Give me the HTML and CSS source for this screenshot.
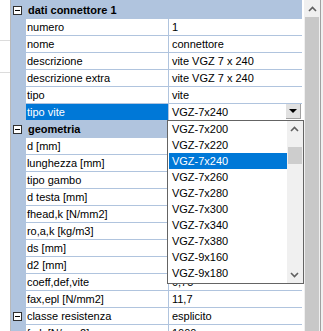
FILE: index.html
```html
<!DOCTYPE html>
<html lang="it">
<head>
  <meta charset="UTF-8" />
  <title>Proprietà connettore</title>
  <link rel="stylesheet" href="styles.css">
</head>
<body>
  <div id="window">
    <div id="side">
      <div class="side-line"></div>
      <div class="side-line"></div>
    </div>

    <div id="grid">
      <div class="row cat first">
        <span class="gutter"><span class="toggle"></span></span>
        <span class="cat-label">dati connettore 1</span>
      </div>
      <div class="row"><span class="gutter"></span><span class="name">numero</span><span class="value">1</span></div>
      <div class="row"><span class="gutter"></span><span class="name">nome</span><span class="value">connettore</span></div>
      <div class="row"><span class="gutter"></span><span class="name">descrizione</span><span class="value">vite VGZ 7 x 240</span></div>
      <div class="row"><span class="gutter"></span><span class="name">descrizione extra</span><span class="value">vite VGZ 7 x 240</span></div>
      <div class="row"><span class="gutter"></span><span class="name">tipo</span><span class="value">vite</span></div>
      <div class="row selected">
        <span class="gutter"></span>
        <span class="name">tipo vite</span>
        <span class="value combo">VGZ-7x240<span class="combo-btn"><span class="tri-down"></span></span></span>
      </div>

      <div class="row cat">
        <span class="gutter"><span class="toggle"></span></span>
        <span class="cat-label">geometria</span>
      </div>
      <!-- values of these rows sit under the open list -->
      <div class="row"><span class="gutter"></span><span class="name">d [mm]</span><span class="value"></span></div>
      <div class="row"><span class="gutter"></span><span class="name">lunghezza [mm]</span><span class="value"></span></div>
      <div class="row"><span class="gutter"></span><span class="name">tipo gambo</span><span class="value"></span></div>
      <div class="row"><span class="gutter"></span><span class="name">d testa [mm]</span><span class="value"></span></div>
      <div class="row"><span class="gutter"></span><span class="name">fhead,k [N/mm2]</span><span class="value"></span></div>
      <div class="row"><span class="gutter"></span><span class="name">ro,a,k [kg/m3]</span><span class="value"></span></div>
      <div class="row"><span class="gutter"></span><span class="name">ds [mm]</span><span class="value"></span></div>
      <div class="row"><span class="gutter"></span><span class="name">d2 [mm]</span><span class="value"></span></div>
      <div class="row"><span class="gutter"></span><span class="name">coeff,def,vite</span><span class="value">0,75</span></div>
      <div class="row"><span class="gutter"></span><span class="name">fax,epl [N/mm2]</span><span class="value">11,7</span></div>
      <div class="row">
        <span class="gutter"><span class="toggle"></span></span>
        <span class="name">classe resistenza</span><span class="value">esplicito</span>
      </div>
      <div class="row"><span class="gutter"></span><span class="name">fu,k [N/mm2]</span><span class="value">1000</span></div>

      <div id="dropdown">
        <ul class="items">
          <li>VGZ-7x200</li>
          <li>VGZ-7x220</li>
          <li class="picked">VGZ-7x240</li>
          <li>VGZ-7x260</li>
          <li>VGZ-7x280</li>
          <li>VGZ-7x300</li>
          <li>VGZ-7x340</li>
          <li>VGZ-7x380</li>
          <li>VGZ-9x160</li>
          <li>VGZ-9x180</li>
        </ul>
        <div class="list-scroll">
          <div class="arrow">
            <svg width="9" height="6" viewBox="0 0 9 6"><path d="M1 5 L4.5 1.5 L8 5" fill="none" stroke="#606060" stroke-width="1.6"/></svg>
          </div>
          <div class="list-track">
            <div class="list-thumb"></div>
          </div>
          <div class="arrow">
            <svg width="9" height="6" viewBox="0 0 9 6"><path d="M1 1 L4.5 4.5 L8 1" fill="none" stroke="#606060" stroke-width="1.6"/></svg>
          </div>
        </div>
      </div>
    </div>

    <div id="vscroll">
      <div class="arrow">
        <svg width="9" height="6" viewBox="0 0 9 6"><path d="M1 5 L4.5 1.5 L8 5" fill="none" stroke="#606060" stroke-width="1.6"/></svg>
      </div>
      <div class="thumb"></div>
    </div>
    <div id="edge"></div>
  </div>
</body>
</html>
```

FILE: styles.css
```css
body {
  margin: 0;
  background: #ffffff;
  font-family: "Liberation Sans", Arial, sans-serif;
  font-size: 11px;
  color: #000;
  overflow: hidden;
}

#window {
  display: flex;
  width: 323px;
  height: 331px;
  overflow: hidden;
}

#side {
  width: 10px;
  border-right: 1px solid #b9b9b9;
  background: #fff;
  padding-top: 40px;
}

.side-line {
  height: 1px;
  background: #dcdcdc;
  margin-bottom: 31px;
}

#grid {
  position: relative;
  width: 294px;
  padding-right: 1px;
}

.row {
  display: flex;
  height: 17px;
}

.row.first {
  height: 19px;
  align-items: flex-end;
}

.gutter {
  width: 15px;
  height: 17px;
  flex: none;
  background: #b0c4de;
  position: relative;
}

.toggle {
  position: absolute;
  left: 2px;
  top: 4px;
  width: 7px;
  height: 7px;
  border: 1px solid #303030;
  background: #fff;
}

.toggle::after {
  content: "";
  position: absolute;
  left: 1px;
  top: 3px;
  width: 5px;
  height: 1px;
  background: #000;
}

.name {
  width: 143px;
  flex: none;
  box-sizing: border-box;
  height: 17px;
  line-height: 16px;
  padding-left: 1px;
  border-right: 1px solid #b0c4de;
  border-bottom: 1px solid #b0c4de;
  white-space: nowrap;
  overflow: hidden;
}

.value {
  flex: 1;
  box-sizing: border-box;
  height: 17px;
  line-height: 16px;
  padding-left: 3px;
  border-bottom: 1px solid #b0c4de;
  white-space: nowrap;
  overflow: hidden;
}

.row.cat {
  background: #b0c4de;
}

.cat-label {
  font-weight: bold;
  line-height: 16px;
  height: 17px;
  padding-left: 2px;
}

.row.selected .name {
  background: #0078d7;
  color: #fff;
}

.combo {
  position: relative;
}

.combo-btn {
  position: absolute;
  right: 1px;
  top: 0;
  width: 15px;
  height: 15px;
  box-sizing: border-box;
  background: #e1e1e1;
  border-right: 1px solid #a0a0a0;
  border-bottom: 1px solid #a0a0a0;
  display: flex;
  align-items: center;
  justify-content: center;
}

.tri-down {
  width: 0;
  height: 0;
  border-left: 4px solid transparent;
  border-right: 4px solid transparent;
  border-top: 4px solid #000;
}

#dropdown {
  position: absolute;
  left: 156px;
  top: 120px;
  width: 137px;
  height: 164px;
  box-sizing: border-box;
  border: 1px solid #646464;
  background: #fff;
  display: flex;
}

.items {
  list-style: none;
  margin: 0;
  padding: 0;
  flex: 1;
}

.items li {
  height: 16px;
  line-height: 16px;
  font-size: 11px;
  padding-left: 3px;
  margin-left: 1px;
}

.items li.picked {
  background: #0078d7;
  color: #fff;
}

.list-scroll {
  width: 16px;
  background: #f0f0f0;
  display: flex;
  flex-direction: column;
}

.arrow {
  height: 16px;
  display: flex;
  align-items: center;
  justify-content: center;
  flex: none;
}

.list-track {
  flex: 1;
  padding-top: 10px;
}

.list-thumb {
  height: 17px;
  margin: 0 1px;
  background: #cdcdcd;
}

#vscroll {
  width: 16px;
  background: #f0f0f0;
  display: flex;
  flex-direction: column;
  margin-left: 1px;
}

#vscroll .arrow {
  height: 17px;
}

#vscroll .thumb {
  flex: 1;
  margin: 0 1px;
  background: #c8c8c8;
}

#edge {
  width: 2px;
  border-left: 1px solid #a0a0a0;
  background: #f0f0f0;
}
```
